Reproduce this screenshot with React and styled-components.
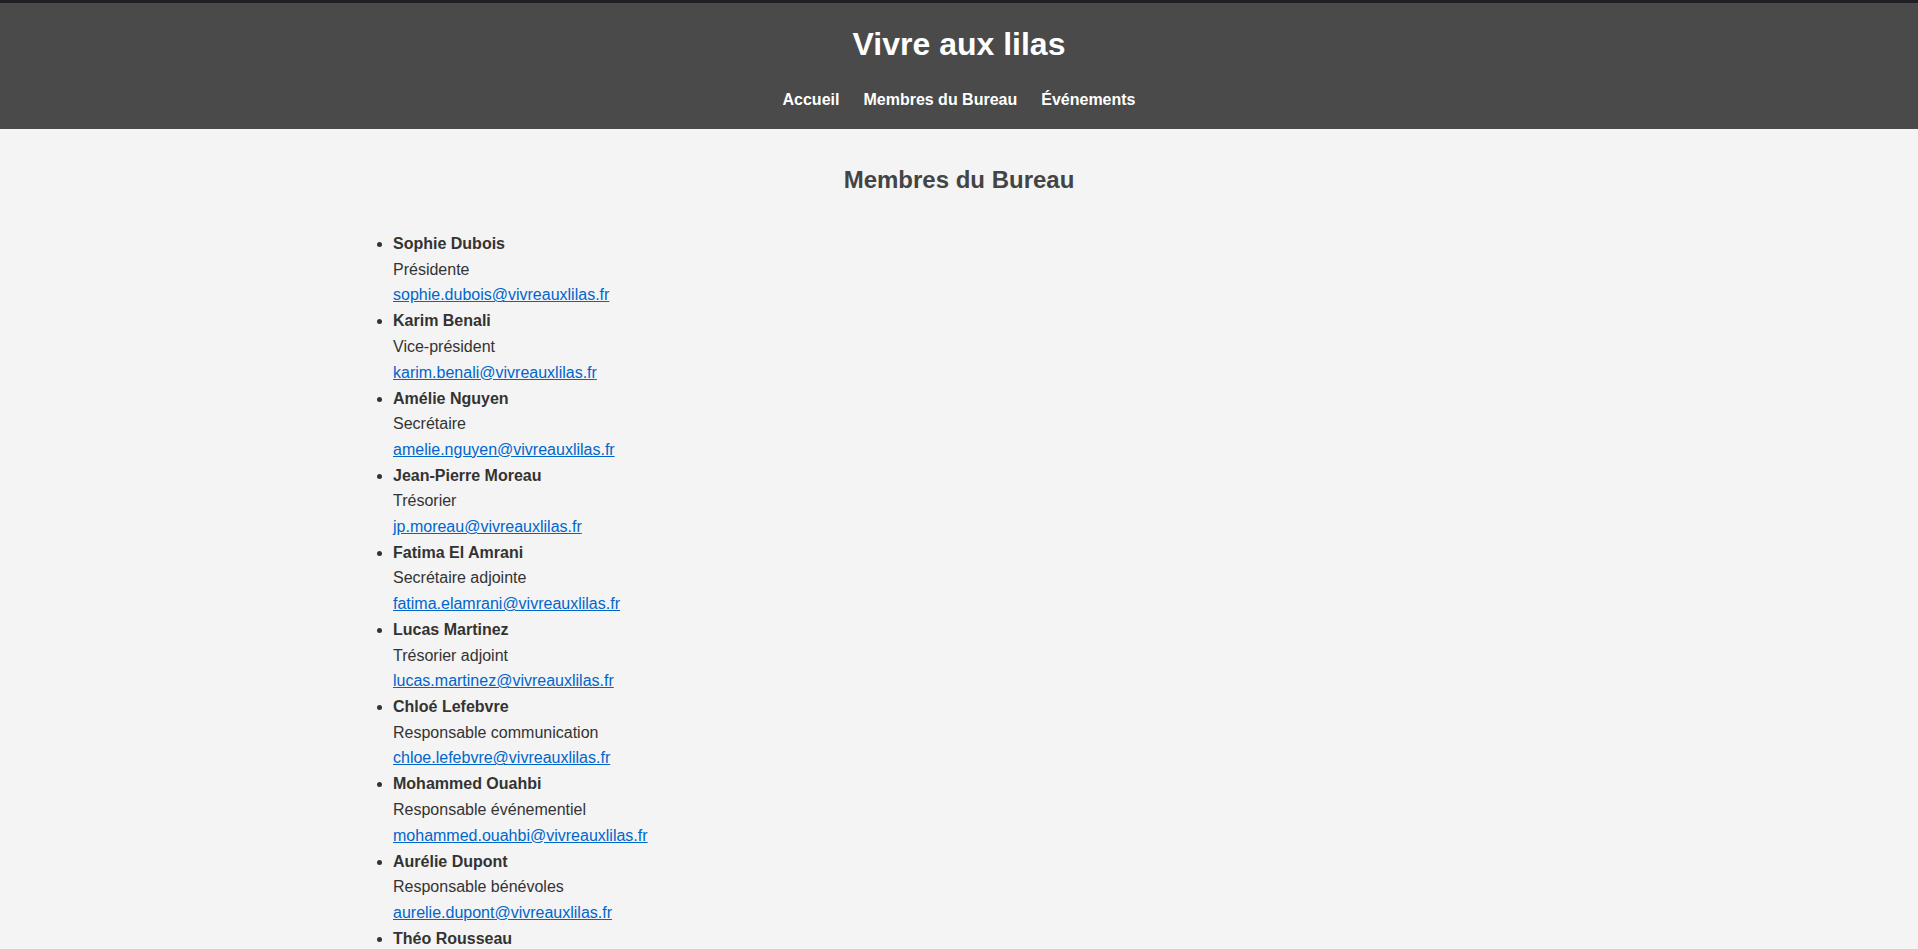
import React from "react";
import styled, { createGlobalStyle } from "styled-components";

const GlobalStyle = createGlobalStyle`
  html, body {
    margin: 0;
    padding: 0;
  }
  body {
    font-family: "Liberation Sans", Arial, sans-serif;
    font-size: 16px;
    line-height: 1.6;
    background: #f4f4f4;
    color: #333;
  }
`;

const Header = styled.header`
  background: #4a4a4a;
  border-top: 3px solid #1f1f24;
  padding: 16px 0;
  text-align: center;
  color: #fff;
`;

const Title = styled.h1`
  margin: 0;
  font-size: 32px;
  font-weight: bold;
`;

const NavList = styled.ul`
  list-style: none;
  margin: 17px 0 0;
  padding: 0;
  display: flex;
  justify-content: center;
  gap: 24px;
`;

const NavLink = styled.a`
  color: #fff;
  font-weight: bold;
  text-decoration: none;
`;

const Main = styled.main`
  max-width: 1200px;
  margin: 0 auto;
  padding: 32px 20px;
  box-sizing: border-box;
`;

const SectionTitle = styled.h2`
  margin: 0 0 32px;
  text-align: center;
  font-size: 24px;
  color: #444;
`;

const MemberList = styled.ul`
  margin: 0;
  padding-left: 14px;
`;

const Member = styled.li`
  margin-bottom: 0.4px;
`;

const Name = styled.strong`
  font-weight: bold;
`;

const Role = styled.span``;

const Email = styled.a`
  color: #0066cc;
  text-decoration: underline;
`;

const members = [
  ["Sophie Dubois", "Présidente", "sophie.dubois@vivreauxlilas.fr"],
  ["Karim Benali", "Vice-président", "karim.benali@vivreauxlilas.fr"],
  ["Amélie Nguyen", "Secrétaire", "amelie.nguyen@vivreauxlilas.fr"],
  ["Jean-Pierre Moreau", "Trésorier", "jp.moreau@vivreauxlilas.fr"],
  ["Fatima El Amrani", "Secrétaire adjointe", "fatima.elamrani@vivreauxlilas.fr"],
  ["Lucas Martinez", "Trésorier adjoint", "lucas.martinez@vivreauxlilas.fr"],
  ["Chloé Lefebvre", "Responsable communication", "chloe.lefebvre@vivreauxlilas.fr"],
  ["Mohammed Ouahbi", "Responsable événementiel", "mohammed.ouahbi@vivreauxlilas.fr"],
  ["Aurélie Dupont", "Responsable bénévoles", "aurelie.dupont@vivreauxlilas.fr"],
  ["Théo Rousseau", "Responsable jeunesse", "theo.rousseau@vivreauxlilas.fr"],
];

export default function App() {
  return (
    <>
      <GlobalStyle />
      <Header>
        <Title>Vivre aux lilas</Title>
        <nav>
          <NavList>
            <li><NavLink href="#">Accueil</NavLink></li>
            <li><NavLink href="#">Membres du Bureau</NavLink></li>
            <li><NavLink href="#">Événements</NavLink></li>
          </NavList>
        </nav>
      </Header>
      <Main>
        <SectionTitle>Membres du Bureau</SectionTitle>
        <MemberList>
          {members.map(([name, role, email]) => (
            <Member key={email}>
              <Name>{name}</Name>
              <br />
              <Role>{role}</Role>
              <br />
              <Email href={`mailto:${email}`}>{email}</Email>
            </Member>
          ))}
        </MemberList>
      </Main>
    </>
  );
}
